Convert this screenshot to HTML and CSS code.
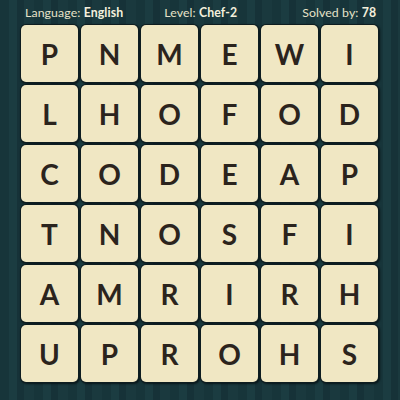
FILE: index.html
```html
<!DOCTYPE html>
<html>
<head>
<meta charset="utf-8">
<link rel="stylesheet" href="styles.css">
</head>
<body>
<div class="page">
  <div class="header">
    <div class="item lang">Language: <b>English</b></div>
    <div class="item level">Level: <b>Chef-2</b></div>
    <div class="item solved">Solved by: <b>78</b></div>
  </div>
  <div class="board">
    <div class="tile">P</div><div class="tile">N</div><div class="tile">M</div><div class="tile">E</div><div class="tile">W</div><div class="tile">I</div>
    <div class="tile">L</div><div class="tile">H</div><div class="tile">O</div><div class="tile">F</div><div class="tile">O</div><div class="tile">D</div>
    <div class="tile">C</div><div class="tile">O</div><div class="tile">D</div><div class="tile">E</div><div class="tile">A</div><div class="tile">P</div>
    <div class="tile">T</div><div class="tile">N</div><div class="tile">O</div><div class="tile">S</div><div class="tile">F</div><div class="tile">I</div>
    <div class="tile">A</div><div class="tile">M</div><div class="tile">R</div><div class="tile">I</div><div class="tile">R</div><div class="tile">H</div>
    <div class="tile">U</div><div class="tile">P</div><div class="tile">R</div><div class="tile">O</div><div class="tile">H</div><div class="tile">S</div>
  </div>
</div>
</body>
</html>
```
FILE: styles.css
```css
html, body {
  margin: 0;
  padding: 0;
}
body {
  width: 400px;
  height: 400px;
  overflow: hidden;
  background-color: #17353a;
  background-image: repeating-linear-gradient(to right,
    #17353a 0px, #17353a 9px,
    #1b3c41 9px, #1b3c41 17px,
    #163238 17px, #163238 24px,
    #1a393e 24px, #1a393e 34px);
  font-family: "Lato", "Open Sans", sans-serif;
}
.page {
  display: flex;
  flex-direction: column;
}
.header {
  display: flex;
  height: 24px;
  align-items: center;
  padding-left: 25px;
  color: #e6e2c8;
  font-size: 12.3px;
  letter-spacing: 0.1px;
}
.header b {
  font-weight: 700;
  color: #f3efdc;
}
.level { margin-left: 41px; }
.solved { margin-left: 65px; }
.board {
  display: grid;
  grid-template-columns: repeat(6, 57px);
  grid-auto-rows: 57px;
  gap: 3px;
  margin-left: 21px;
  margin-top: 1px;
}
.tile {
  box-sizing: border-box;
  background: #f0e7c3;
  border-radius: 5px;
  box-shadow: 0 0 0 1px #0e1d20, 1px 1px 2px 1px rgba(5, 15, 17, 0.8);
  display: flex;
  align-items: center;
  justify-content: center;
  font-size: 28px;
  font-weight: 700;
  color: #2b241d;
  line-height: 1;
}
```
